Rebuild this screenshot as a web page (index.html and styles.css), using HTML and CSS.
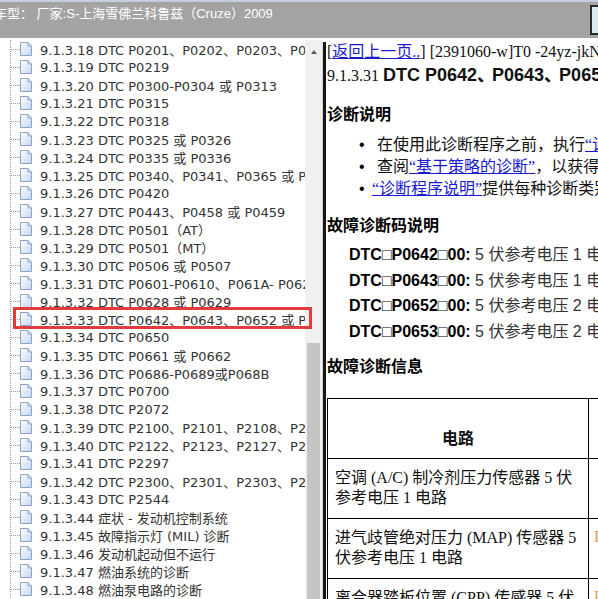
FILE: index.html
```html
<!DOCTYPE html>
<html lang="zh-CN">
<head>
  <meta charset="UTF-8">
  <title>维修手册 - 科鲁兹</title>
  <link rel="stylesheet" href="styles.css">
</head>
<body>
  <div class="topbar">
    <div class="caption">车型： 厂家:S-上海雪佛兰科鲁兹（Cruze）2009</div>
    <div class="corner-btn"></div>
  </div>

  <div class="main">
    <div class="nav-pane">
      <ul class="tree">
        <li><span class="branch"></span><svg class="page" viewBox="0 0 12 14"><defs><linearGradient id="pg" x1="0" y1="0" x2="1" y2="1"><stop offset="0" stop-color="#ffffff"/><stop offset="1" stop-color="#c4d6f0"/></linearGradient></defs><path d="M0.5 0.5H8L11.5 4V13.5H0.5Z" fill="url(#pg)" stroke="#8da4c4"/><path d="M8 0.5V4H11.5" fill="none" stroke="#8da4c4"/></svg><span class="label">9.1.3.18 DTC P0201、P0202、P0203、P0204</span></li>
        <li><span class="branch"></span><svg class="page" viewBox="0 0 12 14"><path d="M0.5 0.5H8L11.5 4V13.5H0.5Z" fill="url(#pg)" stroke="#8da4c4"/><path d="M8 0.5V4H11.5" fill="none" stroke="#8da4c4"/></svg><span class="label">9.1.3.19 DTC P0219</span></li>
        <li><span class="branch"></span><svg class="page" viewBox="0 0 12 14"><path d="M0.5 0.5H8L11.5 4V13.5H0.5Z" fill="url(#pg)" stroke="#8da4c4"/><path d="M8 0.5V4H11.5" fill="none" stroke="#8da4c4"/></svg><span class="label">9.1.3.20 DTC P0300-P0304 或 P0313</span></li>
        <li><span class="branch"></span><svg class="page" viewBox="0 0 12 14"><path d="M0.5 0.5H8L11.5 4V13.5H0.5Z" fill="url(#pg)" stroke="#8da4c4"/><path d="M8 0.5V4H11.5" fill="none" stroke="#8da4c4"/></svg><span class="label">9.1.3.21 DTC P0315</span></li>
        <li><span class="branch"></span><svg class="page" viewBox="0 0 12 14"><path d="M0.5 0.5H8L11.5 4V13.5H0.5Z" fill="url(#pg)" stroke="#8da4c4"/><path d="M8 0.5V4H11.5" fill="none" stroke="#8da4c4"/></svg><span class="label">9.1.3.22 DTC P0318</span></li>
        <li><span class="branch"></span><svg class="page" viewBox="0 0 12 14"><path d="M0.5 0.5H8L11.5 4V13.5H0.5Z" fill="url(#pg)" stroke="#8da4c4"/><path d="M8 0.5V4H11.5" fill="none" stroke="#8da4c4"/></svg><span class="label">9.1.3.23 DTC P0325 或 P0326</span></li>
        <li><span class="branch"></span><svg class="page" viewBox="0 0 12 14"><path d="M0.5 0.5H8L11.5 4V13.5H0.5Z" fill="url(#pg)" stroke="#8da4c4"/><path d="M8 0.5V4H11.5" fill="none" stroke="#8da4c4"/></svg><span class="label">9.1.3.24 DTC P0335 或 P0336</span></li>
        <li><span class="branch"></span><svg class="page" viewBox="0 0 12 14"><path d="M0.5 0.5H8L11.5 4V13.5H0.5Z" fill="url(#pg)" stroke="#8da4c4"/><path d="M8 0.5V4H11.5" fill="none" stroke="#8da4c4"/></svg><span class="label">9.1.3.25 DTC P0340、P0341、P0365 或 P0366</span></li>
        <li><span class="branch"></span><svg class="page" viewBox="0 0 12 14"><path d="M0.5 0.5H8L11.5 4V13.5H0.5Z" fill="url(#pg)" stroke="#8da4c4"/><path d="M8 0.5V4H11.5" fill="none" stroke="#8da4c4"/></svg><span class="label">9.1.3.26 DTC P0420</span></li>
        <li><span class="branch"></span><svg class="page" viewBox="0 0 12 14"><path d="M0.5 0.5H8L11.5 4V13.5H0.5Z" fill="url(#pg)" stroke="#8da4c4"/><path d="M8 0.5V4H11.5" fill="none" stroke="#8da4c4"/></svg><span class="label">9.1.3.27 DTC P0443、P0458 或 P0459</span></li>
        <li><span class="branch"></span><svg class="page" viewBox="0 0 12 14"><path d="M0.5 0.5H8L11.5 4V13.5H0.5Z" fill="url(#pg)" stroke="#8da4c4"/><path d="M8 0.5V4H11.5" fill="none" stroke="#8da4c4"/></svg><span class="label">9.1.3.28 DTC P0501（AT）</span></li>
        <li><span class="branch"></span><svg class="page" viewBox="0 0 12 14"><path d="M0.5 0.5H8L11.5 4V13.5H0.5Z" fill="url(#pg)" stroke="#8da4c4"/><path d="M8 0.5V4H11.5" fill="none" stroke="#8da4c4"/></svg><span class="label">9.1.3.29 DTC P0501（MT）</span></li>
        <li><span class="branch"></span><svg class="page" viewBox="0 0 12 14"><path d="M0.5 0.5H8L11.5 4V13.5H0.5Z" fill="url(#pg)" stroke="#8da4c4"/><path d="M8 0.5V4H11.5" fill="none" stroke="#8da4c4"/></svg><span class="label">9.1.3.30 DTC P0506 或 P0507</span></li>
        <li><span class="branch"></span><svg class="page" viewBox="0 0 12 14"><path d="M0.5 0.5H8L11.5 4V13.5H0.5Z" fill="url(#pg)" stroke="#8da4c4"/><path d="M8 0.5V4H11.5" fill="none" stroke="#8da4c4"/></svg><span class="label">9.1.3.31 DTC P0601-P0610、P061A- P062F</span></li>
        <li><span class="branch"></span><svg class="page" viewBox="0 0 12 14"><path d="M0.5 0.5H8L11.5 4V13.5H0.5Z" fill="url(#pg)" stroke="#8da4c4"/><path d="M8 0.5V4H11.5" fill="none" stroke="#8da4c4"/></svg><span class="label">9.1.3.32 DTC P0628 或 P0629</span></li>
        <li class="hover"><span class="branch"></span><svg class="page" viewBox="0 0 12 14"><path d="M0.5 0.5H8L11.5 4V13.5H0.5Z" fill="url(#pg)" stroke="#8da4c4"/><path d="M8 0.5V4H11.5" fill="none" stroke="#8da4c4"/></svg><span class="label">9.1.3.33 DTC P0642、P0643、P0652 或 P0653</span></li>
        <li><span class="branch"></span><svg class="page" viewBox="0 0 12 14"><path d="M0.5 0.5H8L11.5 4V13.5H0.5Z" fill="url(#pg)" stroke="#8da4c4"/><path d="M8 0.5V4H11.5" fill="none" stroke="#8da4c4"/></svg><span class="label">9.1.3.34 DTC P0650</span></li>
        <li><span class="branch"></span><svg class="page" viewBox="0 0 12 14"><path d="M0.5 0.5H8L11.5 4V13.5H0.5Z" fill="url(#pg)" stroke="#8da4c4"/><path d="M8 0.5V4H11.5" fill="none" stroke="#8da4c4"/></svg><span class="label">9.1.3.35 DTC P0661 或 P0662</span></li>
        <li><span class="branch"></span><svg class="page" viewBox="0 0 12 14"><path d="M0.5 0.5H8L11.5 4V13.5H0.5Z" fill="url(#pg)" stroke="#8da4c4"/><path d="M8 0.5V4H11.5" fill="none" stroke="#8da4c4"/></svg><span class="label">9.1.3.36 DTC P0686-P0689或P068B</span></li>
        <li><span class="branch"></span><svg class="page" viewBox="0 0 12 14"><path d="M0.5 0.5H8L11.5 4V13.5H0.5Z" fill="url(#pg)" stroke="#8da4c4"/><path d="M8 0.5V4H11.5" fill="none" stroke="#8da4c4"/></svg><span class="label">9.1.3.37 DTC P0700</span></li>
        <li><span class="branch"></span><svg class="page" viewBox="0 0 12 14"><path d="M0.5 0.5H8L11.5 4V13.5H0.5Z" fill="url(#pg)" stroke="#8da4c4"/><path d="M8 0.5V4H11.5" fill="none" stroke="#8da4c4"/></svg><span class="label">9.1.3.38 DTC P2072</span></li>
        <li><span class="branch"></span><svg class="page" viewBox="0 0 12 14"><path d="M0.5 0.5H8L11.5 4V13.5H0.5Z" fill="url(#pg)" stroke="#8da4c4"/><path d="M8 0.5V4H11.5" fill="none" stroke="#8da4c4"/></svg><span class="label">9.1.3.39 DTC P2100、P2101、P2108、P2119</span></li>
        <li><span class="branch"></span><svg class="page" viewBox="0 0 12 14"><path d="M0.5 0.5H8L11.5 4V13.5H0.5Z" fill="url(#pg)" stroke="#8da4c4"/><path d="M8 0.5V4H11.5" fill="none" stroke="#8da4c4"/></svg><span class="label">9.1.3.40 DTC P2122、P2123、P2127、P2128</span></li>
        <li><span class="branch"></span><svg class="page" viewBox="0 0 12 14"><path d="M0.5 0.5H8L11.5 4V13.5H0.5Z" fill="url(#pg)" stroke="#8da4c4"/><path d="M8 0.5V4H11.5" fill="none" stroke="#8da4c4"/></svg><span class="label">9.1.3.41 DTC P2297</span></li>
        <li><span class="branch"></span><svg class="page" viewBox="0 0 12 14"><path d="M0.5 0.5H8L11.5 4V13.5H0.5Z" fill="url(#pg)" stroke="#8da4c4"/><path d="M8 0.5V4H11.5" fill="none" stroke="#8da4c4"/></svg><span class="label">9.1.3.42 DTC P2300、P2301、P2303、P2304</span></li>
        <li><span class="branch"></span><svg class="page" viewBox="0 0 12 14"><path d="M0.5 0.5H8L11.5 4V13.5H0.5Z" fill="url(#pg)" stroke="#8da4c4"/><path d="M8 0.5V4H11.5" fill="none" stroke="#8da4c4"/></svg><span class="label">9.1.3.43 DTC P2544</span></li>
        <li><span class="branch"></span><svg class="page" viewBox="0 0 12 14"><path d="M0.5 0.5H8L11.5 4V13.5H0.5Z" fill="url(#pg)" stroke="#8da4c4"/><path d="M8 0.5V4H11.5" fill="none" stroke="#8da4c4"/></svg><span class="label">9.1.3.44 症状 - 发动机控制系统</span></li>
        <li><span class="branch"></span><svg class="page" viewBox="0 0 12 14"><path d="M0.5 0.5H8L11.5 4V13.5H0.5Z" fill="url(#pg)" stroke="#8da4c4"/><path d="M8 0.5V4H11.5" fill="none" stroke="#8da4c4"/></svg><span class="label">9.1.3.45 故障指示灯 (MIL) 诊断</span></li>
        <li><span class="branch"></span><svg class="page" viewBox="0 0 12 14"><path d="M0.5 0.5H8L11.5 4V13.5H0.5Z" fill="url(#pg)" stroke="#8da4c4"/><path d="M8 0.5V4H11.5" fill="none" stroke="#8da4c4"/></svg><span class="label">9.1.3.46 发动机起动但不运行</span></li>
        <li><span class="branch"></span><svg class="page" viewBox="0 0 12 14"><path d="M0.5 0.5H8L11.5 4V13.5H0.5Z" fill="url(#pg)" stroke="#8da4c4"/><path d="M8 0.5V4H11.5" fill="none" stroke="#8da4c4"/></svg><span class="label">9.1.3.47 燃油系统的诊断</span></li>
        <li><span class="branch"></span><svg class="page" viewBox="0 0 12 14"><path d="M0.5 0.5H8L11.5 4V13.5H0.5Z" fill="url(#pg)" stroke="#8da4c4"/><path d="M8 0.5V4H11.5" fill="none" stroke="#8da4c4"/></svg><span class="label">9.1.3.48 燃油泵电路的诊断</span></li>
      </ul>
    </div>

    <div class="scrollbar">
      <div class="arrow-up"></div>
      <div class="thumb"></div>
    </div>
    <div class="splitter"></div>

    <div class="doc">
      <div class="doc-nav">[<a href="#">返回上一页..</a>] [2391060-w]T0 -24yz-jkNbq0e</div>
      <div class="doc-title">9.1.3.31 <b>DTC P0642<span class="sep">、</span>P0643<span class="sep">、</span>P0652 或 P0653</b></div>

      <h3>诊断说明</h3>
      <ul class="steps">
        <li>在使用此诊断程序之前，执行<a href="#">“诊断系统检查 - 车辆”</a>。</li>
        <li>查阅<a href="#">“基于策略的诊断”</a>，以获得对诊断方法的概述。</li>
        <li class="quoted"><a href="#">“诊断程序说明”</a>提供每种诊断类别的概述。</li>
      </ul>

      <h3 class="codes">故障诊断码说明</h3>
      <div class="dtc-list">
        <div><b>DTC□P0642□00:</b> 5 伏参考电压 1 电路电压过低</div>
        <div><b>DTC□P0643□00:</b> 5 伏参考电压 1 电路电压过高</div>
        <div><b>DTC□P0652□00:</b> 5 伏参考电压 2 电路电压过低</div>
        <div><b>DTC□P0653□00:</b> 5 伏参考电压 2 电路电压过高</div>
      </div>

      <h3 class="info">故障诊断信息</h3>
      <table class="circuits">
        <colgroup><col class="c-name"><col class="c-code"></colgroup>
        <tr><th>电路</th><th></th></tr>
        <tr><td>空调 (A/C) 制冷剂压力传感器 5 伏参考电压 1 电路</td><td></td></tr>
        <tr><td>进气歧管绝对压力 (MAP) 传感器 5 伏参考电压 1 电路</td><td class="code">P0641</td></tr>
        <tr><td>离合器踏板位置 (CPP) 传感器 5 伏参考电压 1 电路</td><td class="code">P0641</td></tr>
      </table>
    </div>

    <div class="focus-box"></div>
  </div>
</body>
</html>
```

FILE: styles.css
```css
body {
  margin: 0;
  width: 598px;
  height: 599px;
  overflow: hidden;
  background: #fff;
  font-family: "Liberation Serif", "Noto Sans CJK SC", serif;
}

/* title bar */
.topbar {
  box-sizing: border-box;
  height: 38px;
  display: flex;
  align-items: flex-start;
  overflow: hidden;
  background: #a3a3a3;
  border-top: 2px solid #c6cde0;
}
.caption {
  margin-left: -6px;
  padding-top: 3px;
  line-height: 18px;
  font-family: "Liberation Sans", "Noto Sans CJK SC", sans-serif;
  font-size: 13px;
  color: #fff;
  white-space: pre;
}
.corner-btn {
  box-sizing: border-box;
  flex: none;
  width: 30px;
  height: 30px;
  margin: 3px -22px 0 auto;
  border: 2px solid #2a2a2a;
  background: #d6eaf0;
}

.main {
  position: relative;
  display: flex;
  height: 561px;
}

/* left tree */
.nav-pane {
  width: 305px;
  flex: none;
  overflow: hidden;
  padding-top: 2px;
}
.tree {
  list-style: none;
  margin: 0 0 0 10px;
  padding: 0;
  border-left: 1px dotted #9a9a9a;
}
.tree li {
  display: flex;
  align-items: center;
  height: 18px;
  white-space: nowrap;
}
.branch {
  flex: none;
  width: 9px;
  border-top: 1px dotted #9a9a9a;
}
.page {
  flex: none;
  width: 12px;
  height: 14px;
}
.label {
  margin-left: 8px;
  font-family: "DejaVu Sans", "Noto Sans CJK SC", sans-serif;
  font-size: 13px;
  color: #333;
}
.tree li.hover .label {
  text-decoration: underline;
}

/* scrollbar + splitter */
.scrollbar {
  width: 17px;
  flex: none;
  margin-top: 2px;
  display: flex;
  flex-direction: column;
  background: #f0f0f0;
}
.arrow-up {
  box-sizing: border-box;
  height: 17px;
  padding-top: 10px;
  display: flex;
  justify-content: center;
  align-items: flex-start;
}
.arrow-up::after {
  content: "";
  border-left: 3.5px solid transparent;
  border-right: 3.5px solid transparent;
  border-bottom: 4px solid #5a5a5a;
}
.thumb {
  flex: 1;
  margin: 286px 2px 0;
  background: #c4c4c4;
}
.splitter {
  box-sizing: border-box;
  width: 4px;
  flex: none;
  margin-top: 4px;
  border-left: 1px solid #d4d4d4;
  background: #161616;
}

/* document */
.doc {
  flex: 1;
  min-width: 0;
  overflow: hidden;
  padding-left: 1px;
  white-space: nowrap;
  font-size: 16px;
  color: #111;
}
.doc a {
  color: #1a1ad0;
}
.doc-nav {
  margin-top: 3px;
  line-height: 22px;
}
.doc-title {
  line-height: 24px;
}
.doc-title b {
  font-family: "Liberation Sans", "Noto Sans CJK SC", sans-serif;
  font-size: 18px;
}
.doc-title .sep {
  margin-right: -3px;
}
.doc h3 {
  margin: 16px 0 0;
  font-size: 16px;
  line-height: 22px;
  color: #000;
}
.steps {
  list-style: none;
  margin: 8px 0 0;
  padding-left: 50px;
  line-height: 22px;
}
.steps li::before {
  content: "•";
  display: inline-block;
  width: 18px;
  margin-left: -18px;
  font-family: "Liberation Sans", sans-serif;
  color: #000;
}
.steps li.quoted {
  margin-left: -5px;
}
.steps li.quoted::before {
  width: 13px;
  margin-left: -13px;
}
.doc h3.codes {
  margin-top: 15px;
}
.dtc-list {
  margin-top: 5.3px;
  padding-left: 22px;
  line-height: 25.4px;
  font-family: "Liberation Sans", "Noto Sans CJK SC", sans-serif;
  color: #333;
}
.dtc-list b {
  color: #000;
}
.doc h3.info {
  margin-top: 12px;
}

.circuits {
  margin-top: 20px;
  border-collapse: collapse;
  table-layout: fixed;
  width: 420px;
  white-space: normal;
}
.c-name { width: 261px; }
.c-code { width: 159px; }
.circuits th,
.circuits td {
  box-sizing: border-box;
  height: 60px;
  padding: 0 7px;
  border: 1px solid #000;
  line-height: 20px;
  text-align: left;
  vertical-align: middle;
}
.circuits th {
  vertical-align: bottom;
  padding-bottom: 9px;
  text-align: center;
}
.circuits td.code {
  padding-left: 5px;
  color: #e8a050;
  vertical-align: top;
  padding-top: 8px;
}

/* highlight frame around the current topic */
.focus-box {
  position: absolute;
  left: 13px;
  top: 269px;
  width: 299px;
  height: 22px;
  box-sizing: border-box;
  border: 3px solid #e23b3f;
}
```
